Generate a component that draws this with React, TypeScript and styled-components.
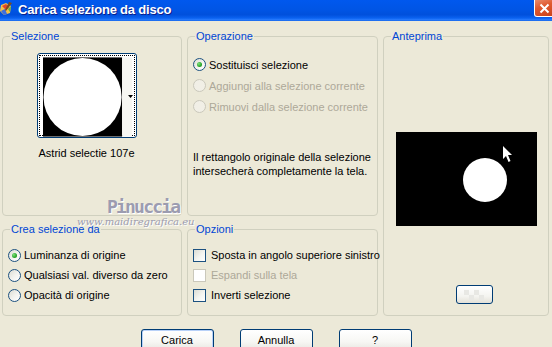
import React from "react";
import styled, { createGlobalStyle } from "styled-components";

const GlobalStyle = createGlobalStyle`
  html, body {
    margin: 0;
    padding: 0;
    background: #ece9d8;
  }
  body {
    font-family: "Liberation Sans", Arial, sans-serif;
    font-size: 11px;
    color: #000;
  }
`;

const Window = styled.div`
  position: relative;
  width: 552px;
  height: 347px;
  overflow: hidden;
  background: #ece9d8;
`;

const TitleBar = styled.div`
  height: 21px;
  display: flex;
  align-items: flex-start;
  background: linear-gradient(
    180deg,
    #0058ee 0%,
    #0055e5 45%,
    #0050dc 70%,
    #0a62f0 86%,
    #2b7eff 95%,
    #1160e4 100%
  );
`;

const TitleIcon = styled.svg`
  margin: 2px 0 0 0;
  flex: none;
`;

const TitleText = styled.span`
  margin: 2px 0 0 5px;
  color: #fff;
  font-weight: bold;
  font-size: 13px;
  line-height: 15px;
  letter-spacing: -0.2px;
  text-shadow: 1px 1px 0 #0a1e8c;
`;

const CloseButton = styled.div`
  margin-left: auto;
  margin-right: -3px;
  width: 21px;
  height: 17px;
  box-sizing: border-box;
  border: 1px solid #fff;
  border-top: none;
  border-radius: 0 0 3px 3px;
  background: linear-gradient(160deg, #e98b6c 0%, #e05a30 40%, #c9421a 100%);
  display: flex;
  align-items: center;
  justify-content: center;
`;

const Body = styled.div`
  display: grid;
  grid-template-columns: 180px 191px 166px;
  grid-template-rows: 186px 93px;
  column-gap: 5px;
  row-gap: 7px;
  padding: 9px 3px 0 2px;
`;

const Group = styled.fieldset<{ $col: number; $row: string; $padRight?: number }>`
  margin: 0;
  min-width: 0;
  box-sizing: border-box;
  border: 1px solid #d0d0bf;
  border-radius: 4px;
  padding: 0 ${(p) => p.$padRight ?? 5}px 0 5px;
  display: flex;
  flex-direction: column;
  white-space: nowrap;
  grid-column: ${(p) => p.$col};
  grid-row: ${(p) => p.$row};
`;

const Legend = styled.legend`
  color: #0046d5;
  font-size: 11px;
  line-height: 13px;
  padding: 0 1px;
  margin-left: 2px;
`;

const ThumbWrap = styled.div`
  display: flex;
  flex-direction: column;
  align-items: center;
  margin-top: 10px;
`;

const ThumbButton = styled.div`
  width: 100px;
  height: 85px;
  box-sizing: border-box;
  border: 1px solid #003c74;
  border-radius: 3px;
  background: #fff;
  padding: 1px;
`;

const FocusFrame = styled.div`
  height: 100%;
  box-sizing: border-box;
  border: 1px dotted #000;
  display: flex;
  padding: 1px 0 0 3px;
`;

const Caption = styled.div`
  margin-top: 9px;
  line-height: 13px;
`;

const Options = styled.div<{ $top: number }>`
  display: flex;
  flex-direction: column;
  margin-top: ${(p) => p.$top}px;
`;

const Row = styled.label<{ $disabled?: boolean; $h?: number; $gap?: number }>`
  display: flex;
  align-items: center;
  gap: ${(p) => p.$gap ?? 5}px;
  height: ${(p) => p.$h ?? 21}px;
  color: ${(p) => (p.$disabled ? "#aca899" : "#000")};
`;

const RadioDot = styled.span<{ $checked?: boolean; $disabled?: boolean }>`
  flex: none;
  width: 13px;
  height: 13px;
  box-sizing: border-box;
  border-radius: 50%;
  border: 1px solid ${(p) => (p.$disabled ? "#cac8bb" : "#1c5180")};
  background: ${(p) =>
    p.$disabled
      ? "#f1efe6"
      : "linear-gradient(135deg, #dcdcd3 0%, #f4f4f0 55%, #ffffff 100%)"};
  display: flex;
  align-items: center;
  justify-content: center;
  &::after {
    content: "";
    display: ${(p) => (p.$checked ? "block" : "none")};
    width: 5px;
    height: 5px;
    border-radius: 50%;
    background: radial-gradient(circle at 35% 35%, #7ee07e 0%, #2aa62a 60%, #1c891c 100%);
  }
`;

const CheckBox = styled.span<{ $disabled?: boolean }>`
  flex: none;
  width: 13px;
  height: 13px;
  box-sizing: border-box;
  border: 1px solid ${(p) => (p.$disabled ? "#cac8bb" : "#1c5180")};
  background: ${(p) =>
    p.$disabled ? "#ffffff" : "linear-gradient(135deg, #dcdcd3 0%, #f4f4f0 55%, #ffffff 100%)"};
`;

const Info = styled.div`
  margin-top: 33px;
  line-height: 14px;
`;

const Preview = styled.div`
  align-self: center;
  margin-top: 89px;
  width: 141px;
  height: 94px;
  background: #000;
  display: flex;
`;

const SmallButton = styled.div`
  align-self: center;
  margin: 59px 0 0 16px;
  width: 37px;
  height: 19px;
  box-sizing: border-box;
  border: 1px solid #003c74;
  border-radius: 3px;
  background: linear-gradient(180deg, #ffffff 0%, #f4f4f0 60%, #e3e1d8 100%);
  display: flex;
  align-items: center;
  justify-content: center;
`;

const Buttons = styled.div`
  display: flex;
  justify-content: center;
  gap: 26px;
  margin-top: 13px;
`;

const PushButton = styled.div<{ $default?: boolean }>`
  width: 73px;
  height: 23px;
  box-sizing: border-box;
  border: 1px solid #003c74;
  border-radius: 3px;
  background: linear-gradient(180deg, #ffffff 0%, #f7f7f4 55%, #ecebe6 85%, #d6d0c5 100%);
  box-shadow: ${(p) =>
    p.$default ? "inset 0 0 0 1px #b8d1f8, inset 0 -1px 0 1px #6b91d8" : "none"};
  display: flex;
  align-items: center;
  justify-content: center;
  line-height: 13px;
`;

const Watermark = styled.div`
  position: absolute;
  left: 77px;
  top: 197px;
  display: flex;
  flex-direction: column;
  align-items: flex-start;
  pointer-events: none;
  color: #9c9cb0;
  text-shadow: 1px 1px 0 #ffffff;
`;

const WmName = styled.span`
  font-family: "DejaVu Sans Mono", monospace;
  font-weight: bold;
  font-size: 18px;
  letter-spacing: -1.8px;
  line-height: 19px;
  margin-left: 30px;
`;

const WmSite = styled.span`
  font-family: "DejaVu Serif", serif;
  font-style: italic;
  font-size: 10px;
  line-height: 12px;
`;

function Radio({
  label,
  checked,
  disabled,
  h,
}: {
  label: string;
  checked?: boolean;
  disabled?: boolean;
  h?: number;
}) {
  return (
    <Row $disabled={disabled} $h={h} $gap={3}>
      <RadioDot $checked={checked} $disabled={disabled} />
      {label}
    </Row>
  );
}

function Check({ label, disabled }: { label: string; disabled?: boolean }) {
  return (
    <Row $disabled={disabled} $h={20}>
      <CheckBox $disabled={disabled} />
      {label}
    </Row>
  );
}

export default function App() {
  return (
    <Window>
      <GlobalStyle />
      <TitleBar>
        <TitleIcon width="13" height="14" viewBox="0 0 13 14">
          <path d="M1 3 L6 1 L11 4 L10 11 L4 13 L0 9 Z" fill="#f2c14a" />
          <path d="M2 4 L6 2 L9 5 L6 8 Z" fill="#e2472a" />
          <path d="M1 9 L5 7 L7 12 L4 13 Z" fill="#3c6fe0" />
          <path d="M8 7 L11 4 L10 10 Z" fill="#5bb24a" />
          <path d="M9 0 L12 1 L6 9 L5 8 Z" fill="#7a4a20" />
        </TitleIcon>
        <TitleText>Carica selezione da disco</TitleText>
        <CloseButton>
          <svg width="11" height="11" viewBox="0 0 11 11">
            <path d="M1.5 1.5 L9.5 9.5 M9.5 1.5 L1.5 9.5" stroke="#fff" strokeWidth="2" />
          </svg>
        </CloseButton>
      </TitleBar>

      <Body>
        <Group $col={1} $row="1" $padRight={16}>
          <Legend>Selezione</Legend>
          <ThumbWrap>
            <ThumbButton>
              <FocusFrame>
                <svg width="92" height="80" viewBox="0 0 92 80">
                  <rect x="0" y="0" width="80" height="80" fill="#000" />
                  <circle cx="40" cy="40" r="39.5" fill="#fff" />
                  <rect x="80" y="0" width="10" height="80" fill="#f6f6f2" />
                  <path d="M86 38 L91 38 L88.5 41 Z" fill="#000" />
                </svg>
              </FocusFrame>
            </ThumbButton>
            <Caption>Astrid selectie 107e</Caption>
          </ThumbWrap>
        </Group>

        <Group $col={2} $row="1">
          <Legend>Operazione</Legend>
          <Options $top={11}>
            <Radio label="Sostituisci selezione" checked />
            <Radio label="Aggiungi alla selezione corrente" disabled />
            <Radio label="Rimuovi dalla selezione corrente" disabled />
          </Options>
          <Info>
            Il rettangolo originale della selezione
            <br />
            intersecherà completamente la tela.
          </Info>
        </Group>

        <Group $col={3} $row="1 / 3">
          <Legend>Anteprima</Legend>
          <Preview>
            <svg width="141" height="94" viewBox="0 0 141 94">
              <circle cx="89" cy="48" r="22" fill="#fff" />
              <path
                d="M107 14 L107 27 L110 24 L112.5 30 L114.5 29 L112 23 L116 23 Z"
                fill="#fff"
              />
            </svg>
          </Preview>
          <SmallButton>
            <svg width="20" height="10" viewBox="0 0 20 10">
              <rect x="0" y="0" width="5" height="5" fill="#e8e8e4" />
              <rect x="10" y="0" width="5" height="5" fill="#e8e8e4" />
              <rect x="5" y="5" width="5" height="5" fill="#e8e8e4" />
              <rect x="15" y="5" width="5" height="5" fill="#e8e8e4" />
            </svg>
          </SmallButton>
        </Group>

        <Group $col={1} $row="2">
          <Legend>Crea selezione da</Legend>
          <Options $top={9}>
            <Radio label="Luminanza di origine" checked h={20} />
            <Radio label="Qualsiasi val. diverso da zero" h={20} />
            <Radio label="Opacità di origine" h={20} />
          </Options>
        </Group>

        <Group $col={2} $row="2">
          <Legend>Opzioni</Legend>
          <Options $top={9}>
            <Check label="Sposta in angolo superiore sinistro" />
            <Check label="Espandi sulla tela" disabled />
            <Check label="Inverti selezione" />
          </Options>
        </Group>
      </Body>

      <Buttons>
        <PushButton $default>Carica</PushButton>
        <PushButton>Annulla</PushButton>
        <PushButton>?</PushButton>
      </Buttons>

      <Watermark>
        <WmName>Pinuccia</WmName>
        <WmSite>www.maidiregrafica.eu</WmSite>
      </Watermark>
    </Window>
  );
}
